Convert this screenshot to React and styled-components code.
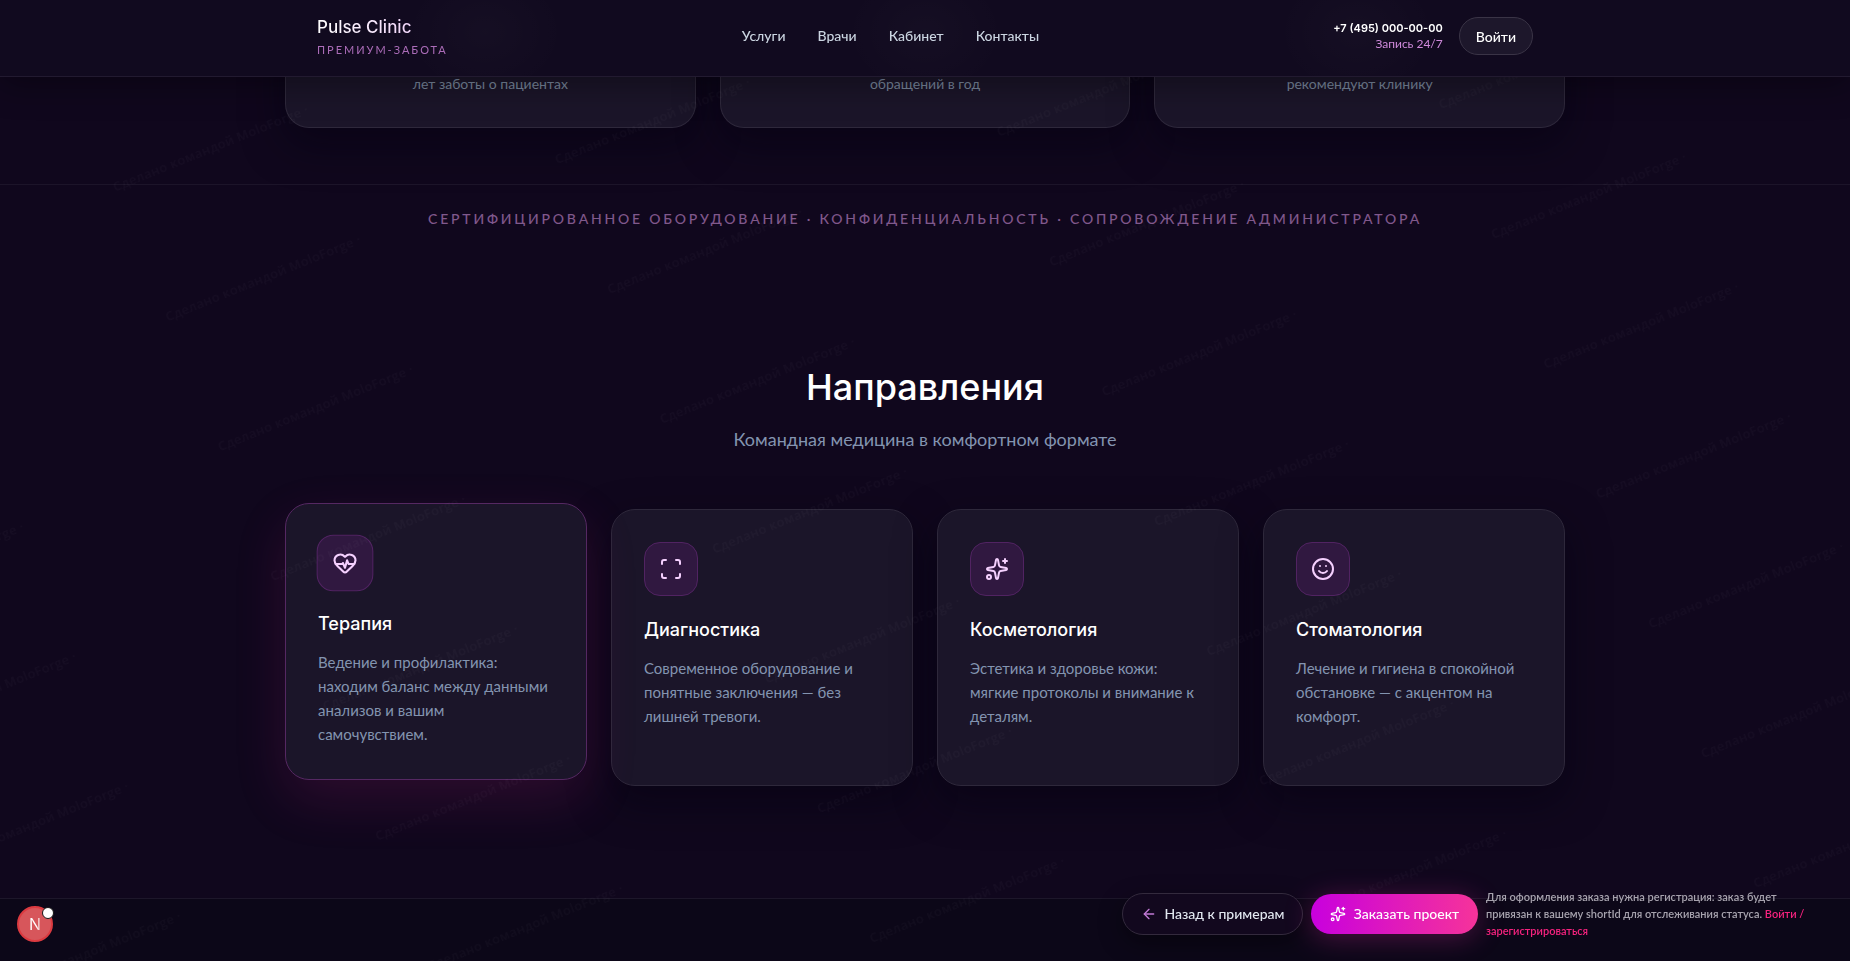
import React from 'react';
import styled, { createGlobalStyle, css } from 'styled-components';
import { ArrowLeft, HeartPulse, Scan, Smile, Sparkles } from 'lucide-react';

const STATS = ['лет заботы о пациентах', 'обращений в год', 'рекомендуют клинику'];

const NAV = [
  { label: 'Услуги', href: '#services' },
  { label: 'Врачи', href: '#doctors' },
  { label: 'Кабинет', href: '#account' },
  { label: 'Контакты', href: '#contacts' },
];

const SERVICES = [
  {
    title: 'Терапия',
    text: 'Ведение и профилактика: находим баланс между данными анализов и вашим самочувствием.',
    icon: HeartPulse,
    raised: true,
  },
  {
    title: 'Диагностика',
    text: 'Современное оборудование и понятные заключения — без лишней тревоги.',
    icon: Scan,
  },
  {
    title: 'Косметология',
    text: 'Эстетика и здоровье кожи: мягкие протоколы и внимание к деталям.',
    icon: Sparkles,
  },
  {
    title: 'Стоматология',
    text: 'Лечение и гигиена в спокойной обстановке — с акцентом на комфорт.',
    icon: Smile,
  },
];

const App = () => {
  return (
    <Page>
      <GlobalStyle />

      <Header>
        <HeaderInner>
          <Brand href="#top">
            <BrandName>Pulse Clinic</BrandName>
            <BrandNote>Премиум-забота</BrandNote>
          </Brand>
          <Nav>
            {NAV.map(({ label, href }) => (
              <NavLink key={label} href={href}>
                {label}
              </NavLink>
            ))}
          </Nav>
          <HeaderSide>
            <Contact>
              <Phone href="tel:+74950000000">+7 (495) 000-00-00</Phone>
              <ContactNote>Запись 24/7</ContactNote>
            </Contact>
            <LoginButton type="button">Войти</LoginButton>
          </HeaderSide>
        </HeaderInner>
      </Header>

      <StatsSection>
        {STATS.map(label => (
          <StatCard key={label}>{label}</StatCard>
        ))}
      </StatsSection>

      <TrustStrip>Сертифицированное оборудование · Конфиденциальность · Сопровождение администратора</TrustStrip>

      <ServicesSection id="services">
        <SectionTitle>Направления</SectionTitle>
        <SectionLead>Командная медицина в комфортном формате</SectionLead>
        <ServicesGrid>
          {SERVICES.map(({ title, text, icon: Icon, raised }) => (
            <ServiceCard key={title} $raised={raised}>
              <IconBox $raised={raised}>
                <Icon size={24} strokeWidth={2} aria-hidden="true" />
              </IconBox>
              <ServiceTitle>{title}</ServiceTitle>
              <ServiceText>{text}</ServiceText>
            </ServiceCard>
          ))}
        </ServicesGrid>
      </ServicesSection>

      <Footer />

      <Watermark aria-hidden="true">
        <defs>
          <pattern
            id="watermark"
            width="420"
            height="140"
            patternUnits="userSpaceOnUse"
            patternTransform="translate(325 711) rotate(-22) translate(-40 -70)"
          >
            <text x="40" y="70">
              Сделано командой MoloForge ·
            </text>
          </pattern>
        </defs>
        <rect width="100%" height="100%" fill="url(#watermark)" />
      </Watermark>

      <ActionBar>
        <BackButton type="button">
          <ArrowLeft size={16} aria-hidden="true" />
          Назад к примерам
        </BackButton>
        <OrderButton type="button">
          <Sparkles size={16} aria-hidden="true" />
          Заказать проект
        </OrderButton>
        <OrderNote>
          Для оформления заказа нужна регистрация: заказ будет привязан к вашему shortId для отслеживания статуса.{' '}
          <a href="#login">Войти / зарегистрироваться</a>
        </OrderNote>
      </ActionBar>

      <DevBadge type="button" aria-label="Dev tools">
        <span>N</span>
      </DevBadge>
    </Page>
  );
};

// Global styles
const GlobalStyle = createGlobalStyle`
  * {
    box-sizing: border-box;
  }

  body {
    margin: 0;
    background: #10071d;
    color: #fff;
    font-family: Lato, 'Open Sans', sans-serif;
    font-size: 15px;
  }

  h2, h3, p {
    margin: 0;
  }

  a {
    color: inherit;
    text-decoration: none;
  }

  button {
    font-family: inherit;
    cursor: pointer;
  }
`;

// Styled components
const Page = styled.div`
  display: flex;
  flex-direction: column;
  min-height: 100vh;
  overflow: hidden;
`;

const container = css`
  width: 100%;
  max-width: 1280px;
  margin: 0 auto;
`;

const cardSurface = css`
  border: 1px solid #2e283b;
  border-radius: 24px;
  background: #1b1529;
  box-shadow: 0 16px 40px rgba(4, 2, 16, 0.5);
`;

const Header = styled.header`
  position: fixed;
  top: 0;
  left: 0;
  right: 0;
  z-index: 10;
  border-bottom: 1px solid #221a30;
  background:
    radial-gradient(80px 64px at calc(50% - 440px) 32px, rgba(255, 255, 255, 0.02), transparent),
    radial-gradient(80px 64px at 50% 32px, rgba(255, 255, 255, 0.02), transparent),
    radial-gradient(80px 64px at calc(50% + 432px) 32px, rgba(255, 255, 255, 0.02), transparent),
    #110a1f;
  box-shadow: 0 8px 32px rgba(0, 0, 0, 0.35);
`;

const HeaderInner = styled.div`
  ${container}
  display: flex;
  align-items: center;
  justify-content: space-between;
  height: 76px;
  padding: 0 32px 4px;
`;

const Brand = styled.a`
  display: flex;
  flex-direction: column;
  align-items: flex-start;
`;

const BrandName = styled.span`
  font-family: Inter, sans-serif;
  font-size: 17px;
  font-weight: 500;
  line-height: 28px;
  background: linear-gradient(90deg, #fff, #f0d5f8);
  background-clip: text;
  color: transparent;
`;

const BrandNote = styled.span`
  font-size: 11px;
  line-height: 18px;
  letter-spacing: 0.18em;
  text-transform: uppercase;
  color: rgba(236, 150, 250, 0.7);
`;

const Nav = styled.nav`
  display: flex;
  gap: 32px;
`;

const NavLink = styled.a`
  font-size: 14px;
  font-weight: 500;
  line-height: 20px;
  color: #cbd5e1;
`;

const HeaderSide = styled.div`
  display: flex;
  align-items: center;
  gap: 16px;
`;

const Contact = styled.div`
  display: flex;
  flex-direction: column;
  align-items: flex-end;
  font-size: 12px;
  line-height: 16px;
`;

const Phone = styled.a`
  font-family: Inter, sans-serif;
  font-size: 11px;
  font-weight: 600;
`;

const ContactNote = styled.span`
  color: rgba(240, 160, 252, 0.85);
`;

const LoginButton = styled.button`
  height: 38px;
  padding: 0 16px;
  border: 1px solid #3a3446;
  border-radius: 19px;
  background: #1d172b;
  color: #fff;
  font-size: 14px;
  font-weight: 500;
`;

const StatsSection = styled.section`
  ${container}
  display: grid;
  grid-template-columns: repeat(3, 1fr);
  gap: 24px;
  margin-bottom: 56px;
`;

const StatCard = styled.div`
  ${cardSurface}
  border-top: 0;
  border-radius: 0 0 24px 24px;
  padding: 73px 32px 32px;
  font-size: 14px;
  line-height: 22px;
  text-align: center;
  color: #78859b;
`;

const TrustStrip = styled.p`
  padding: 24px;
  border-top: 1px solid #1c1429;
  font-size: 14px;
  font-weight: 500;
  line-height: 20px;
  letter-spacing: 0.2em;
  text-align: center;
  text-transform: uppercase;
  color: rgba(240, 171, 252, 0.5);
`;

const ServicesSection = styled.section`
  ${container}
  padding: 112px 0;
  text-align: center;
`;

const SectionTitle = styled.h2`
  font-family: Inter, sans-serif;
  font-size: 36px;
  font-weight: 500;
  line-height: 44px;
`;

const SectionLead = styled.p`
  margin-top: 16px;
  font-size: 18px;
  line-height: 28px;
  color: #8394b0;
`;

const ServicesGrid = styled.div`
  display: grid;
  grid-template-columns: repeat(4, 1fr);
  gap: 24px;
  margin-top: 56px;
  text-align: left;
`;

const ServiceCard = styled.article`
  ${cardSurface}
  min-height: 277px;
  padding: 32px;

  ${({ $raised }) =>
    $raised &&
    css`
      border-color: #552862;
      box-shadow: 0 20px 52px rgba(192, 38, 130, 0.16);
      transform: translateY(-6px);
    `}
`;

const IconBox = styled.div`
  display: flex;
  align-items: center;
  justify-content: center;
  width: 54px;
  height: 54px;
  border: 1px solid #512362;
  border-radius: 16px;
  background: #301840;
  color: #f5d0fe;
  transform: ${({ $raised }) => ($raised ? 'scale(1.05)' : 'none')};
`;

const ServiceTitle = styled.h3`
  margin-top: 20px;
  font-family: Inter, sans-serif;
  font-size: 18px;
  font-weight: 500;
  line-height: 28px;
`;

const ServiceText = styled.p`
  margin-top: 12px;
  line-height: 24px;
  color: #8394b0;
`;

const Footer = styled.footer`
  flex: 1;
  min-height: 63px;
  border-top: 1px solid #1d172a;
  background: #0c0718;
`;

const Watermark = styled.svg`
  position: fixed;
  inset: 0;
  z-index: 5;
  width: 100%;
  height: 100%;
  pointer-events: none;

  text {
    font-family: 'Open Sans', sans-serif;
    font-size: 13px;
    font-weight: 600;
    letter-spacing: 0.02em;
    fill: rgba(255, 255, 255, 0.028);
  }
`;

const ActionBar = styled.div`
  position: fixed;
  right: 28px;
  bottom: 22px;
  z-index: 20;
  display: flex;
  align-items: center;
  gap: 8px;
`;

const barButton = css`
  display: flex;
  align-items: center;
  justify-content: center;
  gap: 8px;
  border-radius: 21px;
  font-size: 14px;
  font-weight: 500;
  line-height: 20px;
  white-space: nowrap;
`;

const BackButton = styled.button`
  ${barButton}
  min-width: 181px;
  padding: 10px 16px;
  border: 1px solid #332a3d;
  background: #12081e;
  color: #e2e8f0;
  box-shadow: 0 8px 24px rgba(0, 0, 0, 0.4);

  svg {
    color: #c27ad6;
  }
`;

const OrderButton = styled.button`
  ${barButton}
  min-width: 167px;
  padding: 10px 16px;
  border: 0;
  background: linear-gradient(90deg, #c800de, #f6339a);
  color: #fff;
  box-shadow: 0 4px 28px rgba(225, 42, 160, 0.3);
`;

const OrderNote = styled.p`
  width: 336px;
  font-size: 11px;
  font-weight: 600;
  line-height: 17px;
  color: #a7a3ae;

  a {
    color: #f6227e;
  }
`;

const DevBadge = styled.button`
  position: fixed;
  left: 17px;
  bottom: 19px;
  z-index: 20;
  display: flex;
  align-items: center;
  justify-content: center;
  width: 36px;
  height: 36px;
  padding: 0;
  border: 2px solid #dc3a40;
  border-radius: 50%;
  background: #d7565b;

  span {
    font-family: Inter, sans-serif;
    font-size: 16px;
    font-weight: 400;
    line-height: 20px;
    background: linear-gradient(90deg, #fff 60%, rgba(255, 255, 255, 0.5));
    background-clip: text;
    color: transparent;
  }

  &::after {
    content: '';
    position: absolute;
    top: -1px;
    right: -3px;
    width: 10px;
    height: 10px;
    border: 1px solid #171717;
    border-radius: 50%;
    background: #fff;
  }
`;

export default App;
